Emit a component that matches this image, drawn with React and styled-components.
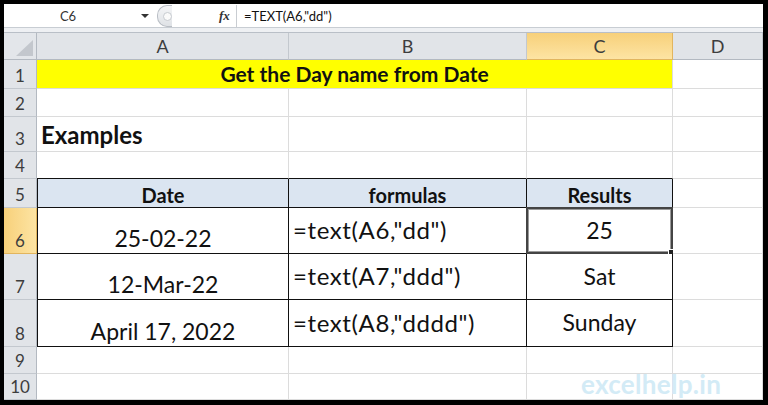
import React from 'react';
import styled, { createGlobalStyle } from 'styled-components';

const GlobalStyle = createGlobalStyle`
  html, body {
    margin: 0;
    padding: 0;
    background: #000;
  }
`;

const FONT = `Lato, "Open Sans", "Liberation Sans", sans-serif`;

const Frame = styled.div`
  width: 768px;
  height: 405px;
  box-sizing: border-box;
  padding: 4px 5px 5px 4px;
  background: #000;
`;

const Window = styled.div`
  width: 759px;
  height: 396px;
  background: #fff;
  overflow: hidden;
  position: relative;
`;

const FormulaBar = styled.div`
  height: 29px;
  box-sizing: border-box;
  display: flex;
  align-items: center;
  background: #fff;
  border-bottom: 1px solid #b9bfc7;
  box-shadow: inset 0 -4px 0 #eef0f3, inset 0 -5px 0 #c8cdd3;
  padding-bottom: 4px;
  font-family: ${FONT};
  font-size: 13px;
  color: #222;
`;

const NameBox = styled.div`
  width: 128px;
  text-align: center;
  color: #333;
`;

const DropArrow = styled.div`
  width: 0;
  height: 0;
  margin-left: 9px;
  border-left: 4px solid transparent;
  border-right: 4px solid transparent;
  border-top: 4px solid #333;
`;

const Knob = styled.div`
  width: 14px;
  height: 20px;
  margin-left: 8px;
  border-radius: 10px 0 0 10px;
  border: 1px solid #b9bec5;
  border-right: none;
  background: linear-gradient(#f4f5f7, #dfe2e6);
  display: flex;
  align-items: center;
  justify-content: flex-end;
`;

const KnobDot = styled.div`
  width: 7px;
  height: 7px;
  border-radius: 50%;
  border: 1px solid #c7cbd0;
  background: #fafafa;
`;

const Fx = styled.div`
  margin-left: 47px;
  width: 17px;
  font-family: "Liberation Serif", serif;
  font-style: italic;
  font-weight: bold;
  font-size: 13px;
  color: #333;
`;

const FxSep = styled.div`
  width: 1px;
  height: 22px;
  background: #c9cdd2;
  margin-right: 7px;
`;

const FormulaText = styled.div`
  font-size: 13px;
  color: #111;
`;

const Sheet = styled.div`
  display: grid;
  grid-template-columns: 33px 252px 238px 146px 90px;
  grid-template-rows: 27px 29px 28px 35px 27px 29px 46px 46px 47px 27px 26px;
  font-family: ${FONT};
`;

const Corner = styled.div`
  background: #e3e6ea;
  border-right: 1px solid #b3b9c1;
  border-bottom: 1px solid #b3b9c1;
  box-sizing: border-box;
  display: flex;
  align-items: flex-end;
  justify-content: flex-end;
  padding: 0 3px 3px 0;
`;

const ColHead = styled.div`
  box-sizing: border-box;
  background: ${(p) => (p.$active ? 'linear-gradient(#f7d07a, #fde4a3)' : '#e1e4e8')};
  border-right: 1px solid ${(p) => (p.$active ? '#e2b55e' : '#c3c8ce')};
  border-bottom: 1px solid ${(p) => (p.$active ? '#e2b55e' : '#b3b9c1')};
  display: flex;
  align-items: center;
  justify-content: center;
  font-size: 18px;
  color: #3d3d3d;
`;

const RowHead = styled.div`
  box-sizing: border-box;
  background: ${(p) => (p.$active ? 'linear-gradient(90deg, #f7d07a, #fde4a3)' : '#e1e4e8')};
  border-right: 1px solid ${(p) => (p.$active ? '#e2b55e' : '#b3b9c1')};
  border-bottom: 1px solid ${(p) => (p.$active ? '#e2b55e' : '#c3c8ce')};
  display: flex;
  align-items: flex-end;
  justify-content: center;
  padding-bottom: 2px;
  font-size: 17px;
  color: #3d3d3d;
`;

const Cell = styled.div`
  box-sizing: border-box;
  position: relative;
  grid-column: ${(p) => p.$span || 'auto'};
  background: ${(p) => p.$bg || '#fff'};
  border-right: 1px solid ${(p) => (p.$box ? '#111' : '#dcdcdc')};
  border-bottom: 1px solid ${(p) => (p.$box || p.$boxTop ? '#111' : '#dcdcdc')};
  border-left: ${(p) => (p.$first ? '1px solid #111' : 'none')};
  display: flex;
  align-items: ${(p) => p.$valign || 'flex-end'};
  justify-content: ${(p) => p.$align || 'flex-start'};
  padding: 0 4px ${(p) => (p.$pb !== undefined ? p.$pb : 2)}px;
  font-size: ${(p) => p.$size || 23}px;
  font-weight: ${(p) => (p.$bold ? 700 : 400)};
  letter-spacing: ${(p) => p.$track || 0}px;
  line-height: 1.1;
  color: #111;
  white-space: nowrap;
`;

const Selected = styled.div`
  position: absolute;
  inset: -1px -1px -1px -1px;
  border: 2px solid #444;
  box-shadow: inset 0 0 0 1px #9a9a9a;
  pointer-events: none;
`;

const FillHandle = styled.div`
  position: absolute;
  right: -4px;
  bottom: -4px;
  width: 5px;
  height: 5px;
  background: #222;
  border: 1px solid #fff;
`;

const Watermark = styled.div`
  position: absolute;
  left: 577px;
  bottom: 0;
  font-family: ${FONT};
  font-weight: 700;
  font-size: 26px;
  line-height: 1.15;
  color: #d3ebf6;
  letter-spacing: 0.3px;
`;

const data = [
  { n: 6, date: '25-02-22', formula: '=text(A6,"dd")', result: '25' },
  { n: 7, date: '12-Mar-22', formula: '=text(A7,"ddd")', result: 'Sat' },
  { n: 8, date: 'April 17, 2022', formula: '=text(A8,"dddd")', result: 'Sunday' },
];

const emptyRows = [2, 4, 9, 10];

export default function App() {
  return (
    <Frame>
      <GlobalStyle />
      <Window>
        <FormulaBar>
          <NameBox>C6</NameBox>
          <DropArrow />
          <Knob>
            <KnobDot />
          </Knob>
          <Fx>fx</Fx>
          <FxSep />
          <FormulaText>=TEXT(A6,"dd")</FormulaText>
        </FormulaBar>
        <Sheet>
          <Corner>
            <svg width="17" height="16" viewBox="0 0 17 16">
              <polygon points="17,0 17,16 0,16" fill="#c3c7cd" />
            </svg>
          </Corner>
          <ColHead>A</ColHead>
          <ColHead>B</ColHead>
          <ColHead $active>C</ColHead>
          <ColHead>D</ColHead>

          <RowHead>1</RowHead>
          <Cell $span="span 3" $bg="#ffff00" $align="center" $valign="center" $bold $size={21} $pb={0}>
            Get the Day name from Date
          </Cell>
          <Cell />

          <RowHead>{emptyRows[0]}</RowHead>
          <Cell />
          <Cell />
          <Cell />
          <Cell />

          <RowHead>3</RowHead>
          <Cell $bold $size={24} $pb={3}>Examples</Cell>
          <Cell />
          <Cell />
          <Cell />

          <RowHead>{emptyRows[1]}</RowHead>
          <Cell $boxTop />
          <Cell $boxTop />
          <Cell $boxTop />
          <Cell />

          <RowHead>5</RowHead>
          <Cell $box $first $bg="#dbe5f1" $align="center" $bold $size={20} $pb={1}>
            Date
          </Cell>
          <Cell $box $bg="#dbe5f1" $align="center" $bold $size={20} $pb={1}>
            formulas
          </Cell>
          <Cell $box $bg="#dbe5f1" $align="center" $bold $size={20} $pb={1}>
            Results
          </Cell>
          <Cell />

          {data.map((r) => (
            <React.Fragment key={r.n}>
              <RowHead $active={r.n === 6}>{r.n}</RowHead>
              <Cell $box $first $align="center">{r.date}</Cell>
              <Cell $box $valign="center" $pb={0} $size={24} $track={0.6}>{r.formula}</Cell>
              <Cell $box $valign="center" $align="center" $pb={0}>
                {r.result}
                {r.n === 6 && (
                  <Selected>
                    <FillHandle />
                  </Selected>
                )}
              </Cell>
              <Cell />
            </React.Fragment>
          ))}

          {emptyRows.slice(2).map((n) => (
            <React.Fragment key={n}>
              <RowHead>{n}</RowHead>
              <Cell />
              <Cell />
              <Cell />
              <Cell />
            </React.Fragment>
          ))}
        </Sheet>
        <Watermark>excelhelp.in</Watermark>
      </Window>
    </Frame>
  );
}
